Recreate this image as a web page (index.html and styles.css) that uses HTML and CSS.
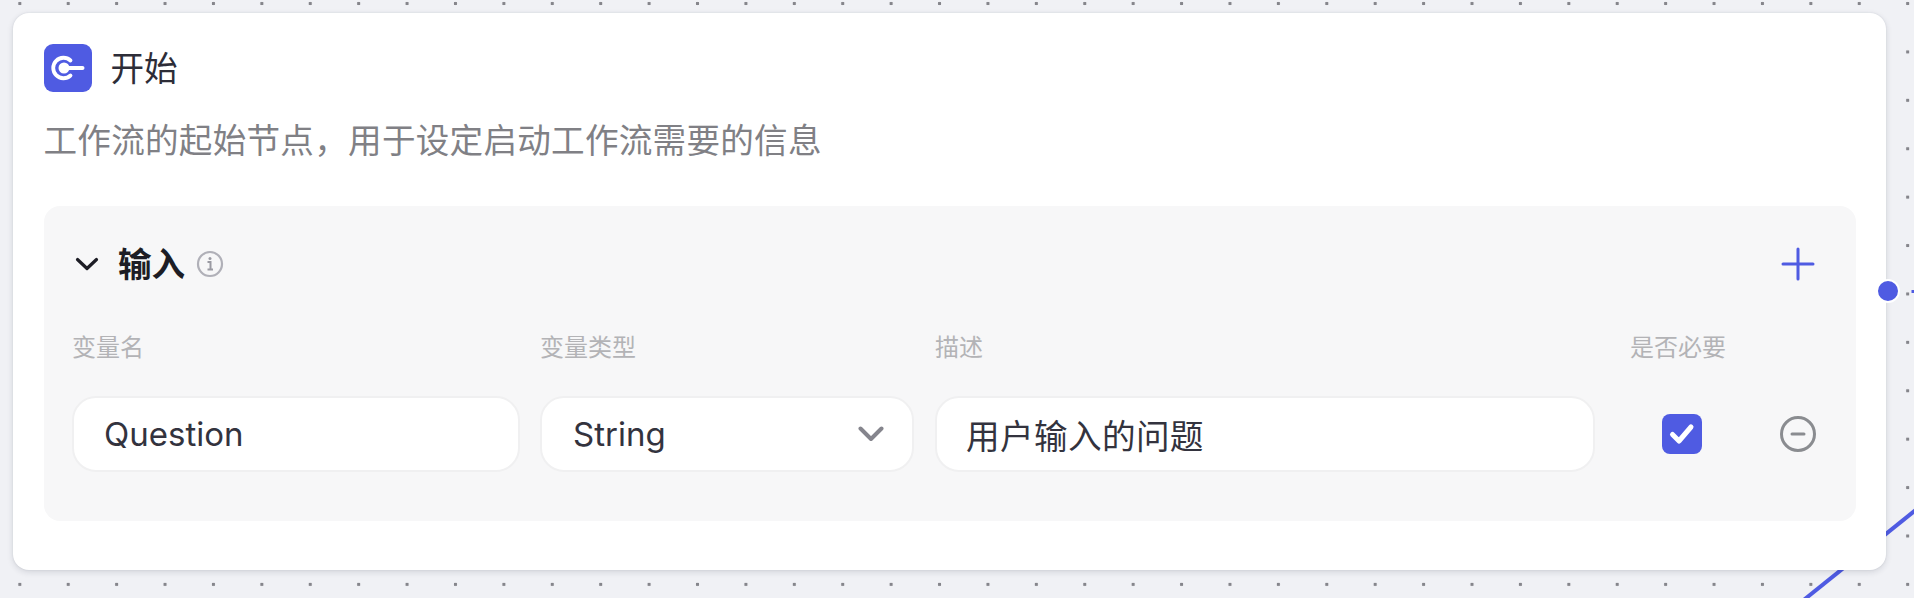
FILE: index.html
```html
<!DOCTYPE html>
<html lang="zh-CN">
<head>
<meta charset="utf-8">
<title>开始</title>
<link rel="stylesheet" href="styles.css">
</head>
<body>
<main class="canvas">
  <svg class="edges" width="1914" height="598" viewBox="0 0 1914 598" aria-hidden="true">
    <path d="M1920 506.500 L1800 603" class="edge"/>
    <path d="M1911.500 291.500 H1916" class="edge edge-short"/>
  </svg>
  <section class="node">
    <header class="node-head">
      <svg class="node-icon" width="48" height="48" viewBox="0 0 48 48" aria-hidden="true">
        <rect width="48" height="48" rx="9" fill="#4f5be2"/>
        <path d="M26.500 16.500 A10.260 10.260 0 1 0 26.500 31.500" fill="none" stroke="#fff" stroke-width="3.800" stroke-linecap="round"/>
        <circle cx="20" cy="24" r="5.500" fill="#fff"/>
        <path d="M20 24 H38.500" stroke="#fff" stroke-width="4" stroke-linecap="round"/>
      </svg>
      <h1 class="node-title">开始</h1>
    </header>
    <p class="node-desc">工作流的起始节点，用于设定启动工作流需要的信息</p>
    <div class="panel">
      <div class="panel-head">
        <svg class="chev" width="24" height="16" viewBox="0 0 24 16" aria-hidden="true"><path d="M2.500 3.500 L12 12.500 L21.500 3.500" fill="none" stroke="#1d1d25" stroke-width="3.200" stroke-linecap="round" stroke-linejoin="round"/></svg>
        <h2 class="panel-title">输入</h2>
        <svg class="info" width="28" height="28" viewBox="0 0 28 28" aria-hidden="true">
          <circle cx="14" cy="14" r="12" fill="none" stroke="#b0b0b8" stroke-width="2.200"/>
          <path d="M11.500 12 H14.500 V19.500 M11.500 19.500 H17" fill="none" stroke="#9a9aa2" stroke-width="2"/>
          <circle cx="14" cy="8.500" r="1.500" fill="#9a9aa2"/>
        </svg>
        <svg class="plus" width="34" height="34" viewBox="0 0 34 34" aria-hidden="true"><path d="M17 2 V32 M2 17 H32" stroke="#4f5be2" stroke-width="3" stroke-linecap="round"/></svg>
      </div>
      <div class="row labels">
        <span class="col-name">变量名</span>
        <span class="col-type">变量类型</span>
        <span class="col-desc">描述</span>
        <span class="col-req">是否必要</span>
      </div>
      <div class="row fields">
        <div class="field col-name">Question</div>
        <div class="field col-type field-select">String
          <svg width="26" height="16" viewBox="0 0 26 16" aria-hidden="true"><path d="M2.500 2.500 L13 13 L23.500 2.500" fill="none" stroke="#85858d" stroke-width="4" stroke-linecap="round" stroke-linejoin="round"/></svg>
        </div>
        <div class="field col-desc field-cjk">用户输入的问题</div>
        <div class="col-req check-cell">
          <svg width="40" height="40" viewBox="0 0 40 40" aria-hidden="true"><rect width="40" height="40" rx="8" fill="#4f5be2"/><path d="M10.500 20.500 L17 27 L29 13" fill="none" stroke="#fff" stroke-width="5" stroke-linecap="round" stroke-linejoin="round"/></svg>
        </div>
        <svg class="remove" width="36" height="36" viewBox="0 0 36 36" aria-hidden="true"><circle cx="18" cy="18" r="16.500" fill="none" stroke="#8a8c90" stroke-width="3"/><path d="M12 18 H24" stroke="#8a8c90" stroke-width="3" stroke-linecap="round"/></svg>
      </div>
    </div>
  </section>
  <span class="handle"></span>
</main>
</body>
</html>
```
FILE: styles.css
```css
* { box-sizing: border-box; }
html, body { margin: 0; padding: 0; }
body {
  width: 1914px;
  height: 598px;
  overflow: hidden;
  font-family: Inter, "Noto Sans CJK SC", sans-serif;
  background-color: #f0f1f5;
}
.canvas {
  position: relative;
  width: 1914px;
  height: 598px;
  padding: 13px 28px 28px 13px;
  background-image: radial-gradient(circle, #85858b 1.6px, transparent 2px);
  background-size: 48.42px 48.42px;
  background-position: -4.4px -20.7px;
}
.edges { position: absolute; left: 0; top: 0; }
.edge { fill: none; stroke: #4f5be2; stroke-width: 4; }
.edge-short { stroke-width: 3; }
.node {
  position: relative;
  height: 557px;
  padding: 31px 30px 0 30.5px;
  background: #fff;
  border-radius: 16px;
  box-shadow: 0 2px 6px rgba(30, 35, 60, 0.14), 0 0 2px rgba(30, 35, 60, 0.1);
}
.node-head { display: flex; align-items: center; gap: 19px; height: 48px; }
.node-icon { flex: none; }
.node-title { margin: 0; padding-top: 2px; font-size: 33.6px; font-weight: 400; line-height: 48px; color: #2d2d38; }
.node-desc { margin: 25px 0 0; height: 48px; font-size: 33.6px; letter-spacing: 0.26px; font-weight: 400; line-height: 48px; color: #808085; }
.panel {
  margin-top: 41px;
  height: 315px;
  padding: 0 34px 0 28.5px;
  background: #f7f7f8;
  border-radius: 16px;
}
.panel-head { display: flex; align-items: center; height: 116px; padding-left: 3px; }
.chev { flex: none; }
.panel-title { margin: 2px 0 0 19px; font-size: 33.6px; font-weight: 600; line-height: 44px; color: #1d1d25; }
.info { flex: none; margin-left: 11px; }
.plus { flex: none; margin-left: auto; margin-right: 7px; }
.row { display: flex; align-items: center; }
.col-name { width: 448px; margin-right: 20px; flex: none; }
.col-type { width: 374px; margin-right: 21px; flex: none; }
.col-desc { width: 660px; margin-right: 35px; flex: none; }
.col-req { width: 150px; flex: none; }
.labels { height: 32px; margin-top: 10px; font-size: 24px; line-height: 32px; color: #b3b3b6; }
.fields { height: 76px; margin-top: 32px; }
.field {
  display: flex;
  align-items: center;
  height: 76px;
  padding: 0 32px 0 30px;
  background: #fff;
  border: 2px solid #f0f0f1;
  border-radius: 24px;
  font-size: 33px;
  color: #33333e;
}
.field-cjk { padding-left: 29px; font-size: 33.6px; letter-spacing: 0.4px; }
.field-select { justify-content: space-between; padding-left: 31px; padding-right: 28px; }
.check-cell { display: flex; padding-left: 32px; }
.remove { flex: none; }
.handle {
  position: absolute;
  left: 1876px;
  top: 279px;
  width: 24px;
  height: 24px;
  background: #4f5be2;
  border: 2px solid #fff;
  border-radius: 50%;
}
```
